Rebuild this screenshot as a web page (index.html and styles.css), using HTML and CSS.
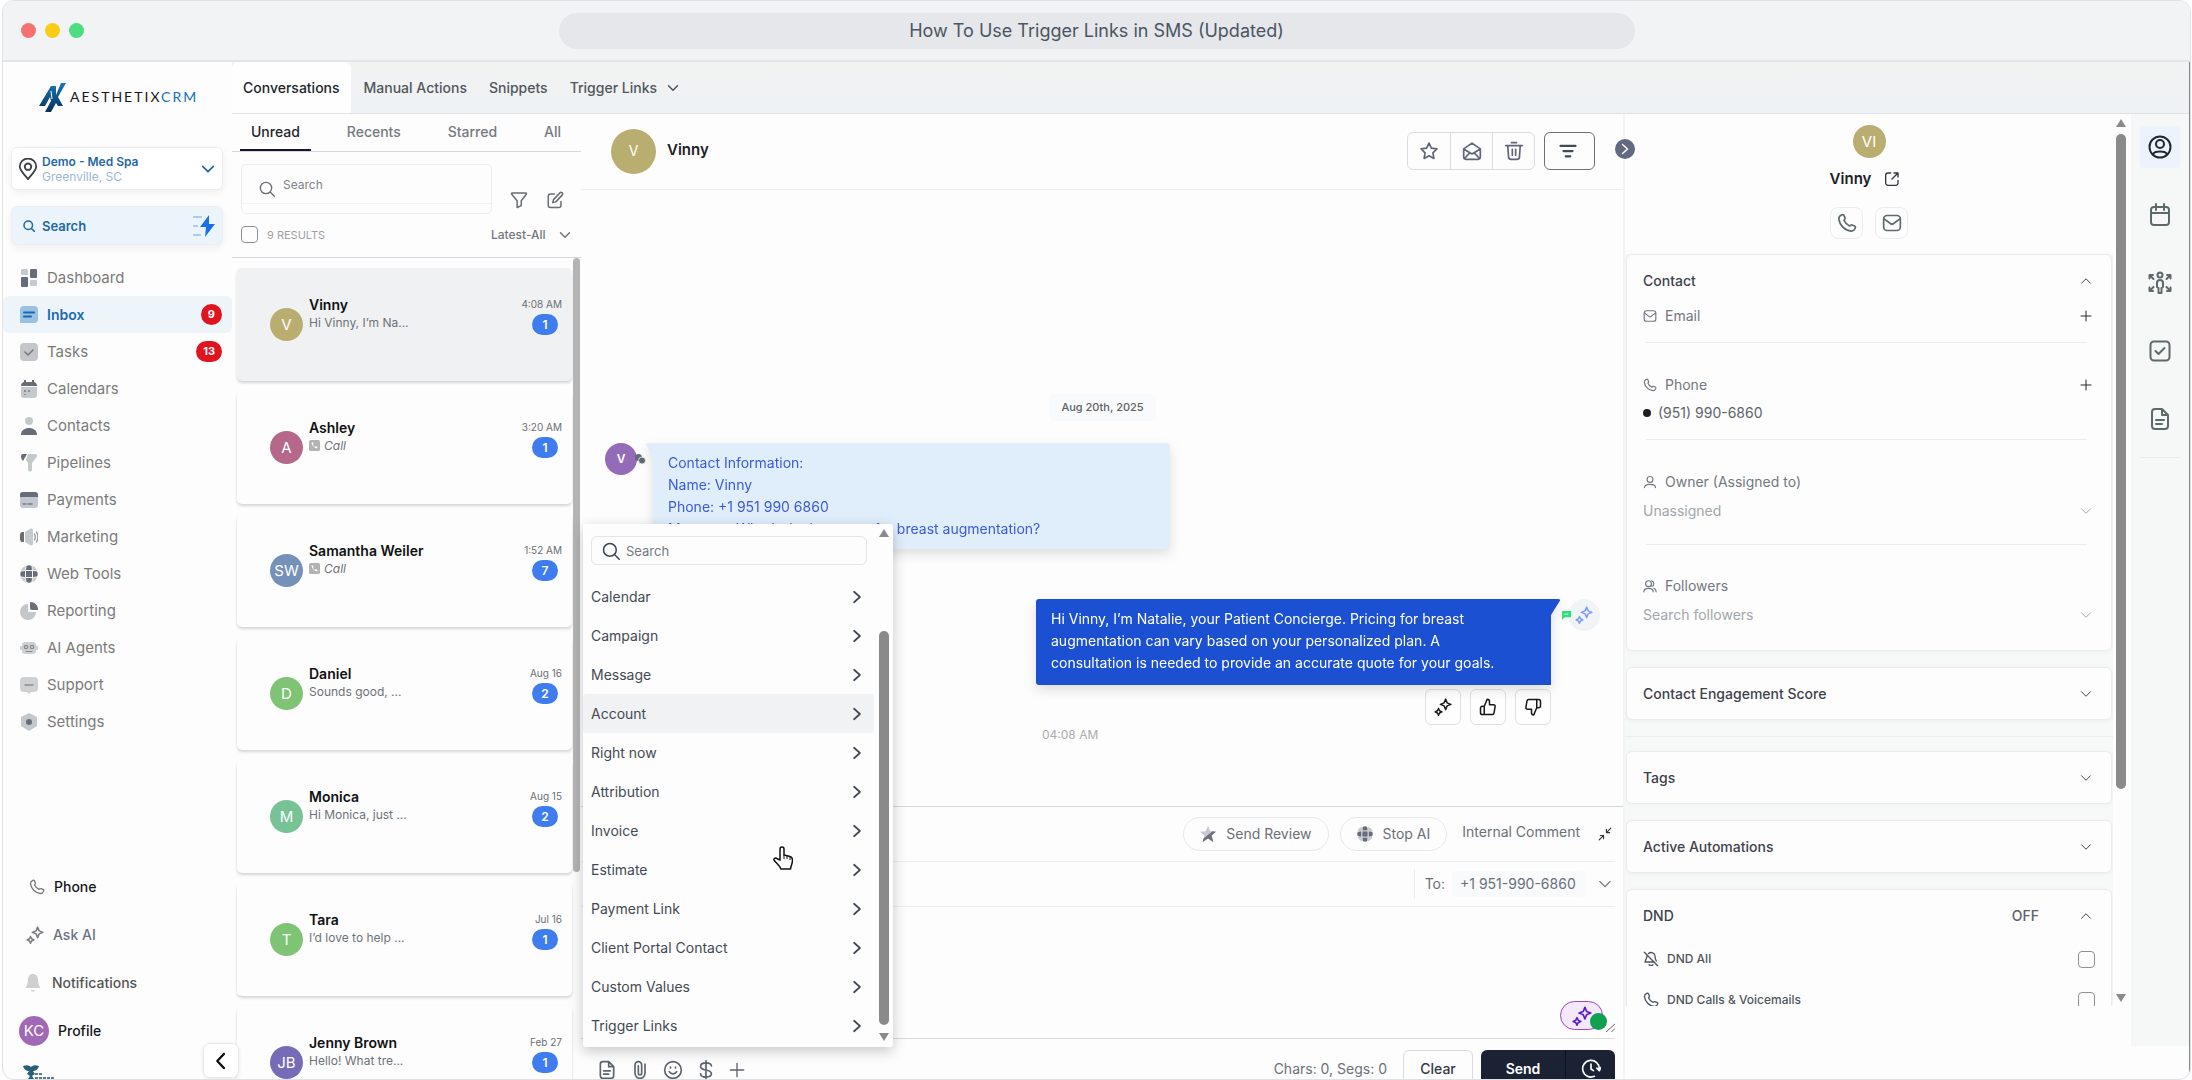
FILE: index.html
```html
<!DOCTYPE html>
<html lang="en">
<head>
<meta charset="utf-8">
<title>How To Use Trigger Links in SMS (Updated)</title>
<link rel="stylesheet" href="styles.css">
</head>
<body>
<svg class="sprite" aria-hidden="true">
  <defs>
    <symbol id="chev-down" viewBox="0 0 24 24"><path d="M3 7.500l9 9 9-9"/></symbol>
    <symbol id="chev-up" viewBox="0 0 24 24"><path d="M3 16.500l9-9 9 9"/></symbol>
    <symbol id="chev-right" viewBox="0 0 24 24"><path d="M7 3l10 9-10 9"/></symbol>
    <symbol id="chev-left" viewBox="0 0 24 24"><path d="M16 2.500L7 12l9 9.500"/></symbol>
    <symbol id="search" viewBox="0 0 24 24"><circle cx="10.500" cy="10.500" r="8.500"/><path d="M17 17l6 6"/></symbol>
    <symbol id="pin" viewBox="0 0 24 24"><path d="M12 23C6 16 3 13 3 9.500a9 9 0 0 1 18 0C21 13 18 16 12 23z"/><circle cx="12" cy="9.500" r="3.500"/></symbol>
    <symbol id="phone" viewBox="0 0 24 24"><path d="M8.400 8.900a14 14 0 0 0 6.700 6.700c1-.6 1.700-1.600 3-1.200l3.400 1.500c.8.500.8 1.600.3 2.400-1 2-2.800 3.700-4.800 3.400C9.500 21 3 14.500 2.200 7 2 5 3.700 3.200 5.700 2.200c.8-.4 1.900-.4 2.400.3l1.500 3.400c.4 1.300-.6 2-1.200 3z"/></symbol>
    <symbol id="mail" viewBox="0 0 24 24"><rect x="2" y="3" width="20" height="18" rx="4"/><path d="M2.500 7l7.600 5.600a3 3 0 0 0 3.800 0L21.500 7"/></symbol>
    <symbol id="mail-open" viewBox="0 0 24 24"><path d="M2 9.500L12 2.500l10 7V19a3 3 0 0 1-3 3H5a3 3 0 0 1-3-3zM2 9.500l10 6 10-6M3 21l6.500-7M21 21l-6.500-7"/></symbol>
    <symbol id="star" viewBox="0 0 24 24"><path d="M12 2.500l2.900 6.100 6.600.9-4.800 4.700 1.200 6.700-5.900-3.200-5.900 3.200 1.200-6.700-4.800-4.700 6.600-.9z"/></symbol>
    <symbol id="trash" viewBox="0 0 24 24"><path d="M2 5.500h20M9 2h6M4.500 5.500l1 14A3 3 0 0 0 8.500 22h7a3 3 0 0 0 3-2.500l1-14M10 10v7M14 10v7"/></symbol>
    <symbol id="lines" viewBox="0 0 24 24"><path d="M2 5h20M6 12h12M9 19h6"/></symbol>
    <symbol id="funnel" viewBox="0 0 24 24"><path d="M3 2.500h18c1 0 1.300 1 .7 1.900L15 13v6.500L9.500 22v-9L2.300 4.400C1.700 3.500 2 2.500 3 2.500z"/></symbol>
    <symbol id="edit" viewBox="0 0 24 24"><path d="M11 4H6a3 3 0 0 0-3 3v12a3 3 0 0 0 3 3h11a3 3 0 0 0 3-3v-5M18.500 2.500a2 2 0 0 1 3 3L13 14.500l-4 1 1-4z"/></symbol>
    <symbol id="external" viewBox="0 0 24 24"><path d="M21 9V3h-6M21 3l-9 9M10 3H6a3.500 3.500 0 0 0-3.500 3.500V18A3.500 3.500 0 0 0 6 21.500h11.500A3.500 3.500 0 0 0 21 18v-4"/></symbol>
    <symbol id="plus" viewBox="0 0 24 24"><path d="M12 2v20M2 12h20"/></symbol>
    <symbol id="sparkles" viewBox="0 0 24 24"><path d="M15.500 1.500l2 5 5 2-5 2-2 5-2-5-5-2 5-2zM6 14l1.400 3L10.500 18.500 7.400 20 6 23l-1.400-3L1.500 18.500 4.600 17z"/></symbol>
    <symbol id="user" viewBox="0 0 24 24"><circle cx="12" cy="7.500" r="5"/><path d="M2.500 21.500c0-4 3-5.500 9.500-5.500s9.500 1.500 9.500 5.500"/></symbol>
    <symbol id="users" viewBox="0 0 24 24"><circle cx="9.500" cy="8" r="5"/><path d="M1.500 22c0-4 3-6 8-6s8 2 8 6M15 3.200a5 5 0 0 1 0 9.600M18.500 16c2.500 1 4 3 4 6"/></symbol>
    <symbol id="bell-off" viewBox="0 0 24 24"><path d="M2 2l20 20M6 7c-.6 6-2.500 7-3 9.500h14M8 4c4-3.500 10-1 10 4 0 3 .6 5 2 7M9 20.500c1.500 1.500 4.500 1.500 6 0"/></symbol>
    <symbol id="doc" viewBox="0 0 24 24"><path d="M14 2H7a3 3 0 0 0-3 3v14a3 3 0 0 0 3 3h10a3 3 0 0 0 3-3V8zM14 2v6h6M8 13h8M8 17h6"/></symbol>
    <symbol id="clip" viewBox="0 0 24 24"><path d="M18 5v11a6 6 0 0 1-12 0V6a4 4 0 0 1 8 0v10a2 2 0 0 1-4 0V7"/></symbol>
    <symbol id="smile" viewBox="0 0 24 24"><circle cx="12" cy="12" r="10"/><path d="M7.500 14c2 3.500 7 3.500 9 0M9 8.500v1M15 8.500v1"/></symbol>
    <symbol id="dollar" viewBox="0 0 24 24"><path d="M18.500 7c-.5-2.500-3-3.500-6.500-3.500S5.500 5 5.500 7.700c0 6 13 2.600 13 8.600 0 2.700-3 4.200-6.500 4.200S5.500 19 5.500 16.500M12 1v22"/></symbol>
    <symbol id="thumb" viewBox="0 0 24 24"><path d="M7 22V11l4-9.500c1.700 0 3 1.300 3 3V9h5.500c1.300 0 2.200 1.100 2 2.300l-1.400 8.500A2.600 2.600 0 0 1 17.600 22H4.500A2.500 2.500 0 0 1 2 19.500v-6A2.500 2.500 0 0 1 4.500 11H7"/></symbol>
    <symbol id="collapse" viewBox="0 0 24 24"><path d="M22 2l-7.500 7.500M14.500 4v5.500H20M2 22l7.500-7.500M4 14.500h5.500V20"/></symbol>
    <symbol id="clock" viewBox="0 0 24 24"><path d="M16 20.800A10 10 0 1 1 22 12M12 6v6l3 2M19 11l3 3 2-4"/></symbol>
    <symbol id="user-circle" viewBox="0 0 24 24"><circle cx="12" cy="12" r="10.500"/><circle cx="12" cy="9" r="4"/><path d="M5 19.500c1-3 3.500-3 7-3s6 0 7 3"/></symbol>
    <symbol id="calendar" viewBox="0 0 24 24"><rect x="3" y="4" width="18" height="18" rx="3"/><path d="M3 10h18M8 1v6M16 1v6"/></symbol>
    <symbol id="check-square" viewBox="0 0 24 24"><rect x="2.500" y="2.500" width="19" height="19" rx="3.500"/><path d="M7.500 12l3 3 6-6"/></symbol>
    <symbol id="spread" viewBox="0 0 24 24"><circle cx="12" cy="4" r="2.500"/><path d="M9 16v-4a3 3 0 0 1 6 0v4l-1.500 1v5h-3v-5zM1.500 7.500V4H5M1.500 4l4 4M22.500 7.500V4H19M22.500 4l-4 4M1.500 16.500V20H5M1.500 20l4-4M22.500 16.500V20H19M22.500 20l-4-4"/></symbol>
    <symbol id="tri-up" viewBox="0 0 10 8"><path d="M5 0l5 8H0z"/></symbol>
    <symbol id="tri-down" viewBox="0 0 10 8"><path d="M0 0h10L5 8z"/></symbol>
    <symbol id="call-tile" viewBox="0 0 12 12"><rect width="12" height="12" rx="2" fill="#b3b3b3"/><path d="M3 2.500l1.500.3.400 1.700-.8.800c.5 1 1.200 1.700 2.200 2.200l.9-.8 1.700.5.300 1.500C7 9.800 2.200 6 3 2.500z" fill="#fff" stroke="none"/></symbol>
    <symbol id="globe" viewBox="0 0 18 18"><g stroke="none"><circle cx="9" cy="9" r="9" fill="#c6c9cf"/><path d="M5.500 0h7v18h-7zM0 5.500h18v7H0z" fill="#fcfcfc"/><rect x="6" y="6" width="6" height="6" fill="#676c7b"/><path d="M6.500 1a5 5 0 0 1 5 0l.5 4H6zM6.500 17a5 5 0 0 0 5 0l.5-4H6zM1 6.500a5 5 0 0 0 0 5l4 .5V6zM17 6.500a5 5 0 0 1 0 5l-4 .5V6z" fill="#676c7b"/></g></symbol>
  </defs>
</svg>

<div class="window">
  <header class="titlebar">
    <div class="dots"><span class="dot red"></span><span class="dot yellow"></span><span class="dot green"></span></div>
    <div class="address">How To Use Trigger Links in SMS (Updated)</div>
  </header>

  <div class="app">
    <aside class="sidebar">
      <div class="brand">
        <svg class="brand-mark" viewBox="0 0 27 29"><defs><linearGradient id="bm" x1="0" y1="0" x2="0" y2="1"><stop offset="0" stop-color="#1479b8"/><stop offset="1" stop-color="#0c2f55"/></linearGradient></defs><path d="M0 23L12 3h5v9l5-12h5l-8 14 5 9h-5l-2-3-5 9H6l6-11-1-4-5 9z" fill="url(#bm)"/><path d="M12 8l1 8" stroke="#fff" stroke-width="1"/></svg>
        <span class="brand-name">AESTHETIX<span class="brand-crm">CRM</span></span>
      </div>
      <button class="location">
        <svg class="i22 pin"><use href="#pin"/></svg>
        <span class="location-text"><strong>Demo - Med Spa</strong><span>Greenville, SC</span></span>
        <svg class="i14 thick"><use href="#chev-down"/></svg>
      </button>
      <button class="side-search">
        <svg class="i12 thick"><use href="#search"/></svg>
        <span>Search</span>
        <svg class="bolt" viewBox="0 0 22 22"><path d="M0 2h9M0 11h5M0 20h8" stroke="#a9cdf0" stroke-width="2"/><path d="M16 0L7 12h6l-1 10L22 9h-6z" fill="#1b70ea"/></svg>
      </button>
      <nav class="nav">
        <a href="#"><svg class="i18" viewBox="0 0 18 18"><g fill="#676c7b"><rect x="10" width="7" height="9" rx="1"/><rect x="1" y="8" width="7" height="10" rx="1"/></g><g fill="#c6c9cf"><rect x="1" width="7" height="6" rx="1"/><rect x="10" y="11" width="7" height="6" rx="1"/></g></svg><span>Dashboard</span></a>
        <a href="#" class="active"><svg class="i18" viewBox="0 0 18 18"><path d="M4 0h10a4 4 0 0 1 4 4v9a4 4 0 0 1-4 4H0V4a4 4 0 0 1 4-4z" fill="#98c1e2"/><path d="M4 6.500h10M4 10.500h7" stroke="#1a69b0" stroke-width="2"/></svg><span>Inbox</span><em class="badge">9</em></a>
        <a href="#"><svg class="i18" viewBox="0 0 18 18"><rect width="18" height="18" rx="4" fill="#c4c6c9"/><path d="M5 9l3 3 5-5" stroke="#74777d" stroke-width="1.500" fill="none"/></svg><span>Tasks</span><em class="badge">13</em></a>
        <a href="#"><svg class="i18" viewBox="0 0 18 18"><path d="M1 7h16v8a3 3 0 0 1-3 3H4a3 3 0 0 1-3-3z" fill="#c6c9cc"/><path d="M1 6a4 4 0 0 1 3-4V0h2v2h6V0h2v2a4 4 0 0 1 3 4z" fill="#676c73"/><path d="M4 10h2v2H4zM8 10h2v2H8zM4 14h2v1H4z" fill="#8a8d92"/></svg><span>Calendars</span></a>
        <a href="#"><svg class="i18" viewBox="0 0 18 18"><circle cx="9" cy="4" r="4" fill="#c6c9cc"/><path d="M1 18c0-5 4-7 8-7s8 2 8 7z" fill="#676c77"/></svg><span>Contacts</span></a>
        <a href="#"><svg class="i18" viewBox="0 0 18 18"><path d="M8 0h7c1.500 0 2 1 2 2.500L12 9v7c0 2-4 2-4 0V9L6 6z" fill="#c4c9cb"/><path d="M2 0h5L3 7C1 5 1 3 1 1.500z" fill="#676c77"/></svg><span>Pipelines</span></a>
        <a href="#"><svg class="i18" viewBox="0 0 18 18"><rect y="1" width="18" height="16" rx="3" fill="#c4c7cf"/><path d="M0 6V4a3 3 0 0 1 3-3h12a3 3 0 0 1 3 3v2z" fill="#676c7b"/><path d="M3 13h3M8 13h4" stroke="#777c85" stroke-width="1.500"/></svg><span>Payments</span></a>
        <a href="#"><svg class="i18" viewBox="0 0 18 18"><path d="M5 4l5-3c2-1 3 0 3 2v12c0 2-1 3-3 2l-5-3z" fill="#c4c9cb"/><path d="M4 4v10H2c-3 0-3-10 0-10z" fill="#6b6e70"/><path d="M14.500 6c1 2 1 4 0 6M16.500 4c1.700 3 1.700 7 0 10" stroke="#8a8d90" stroke-width="1.200" fill="none"/></svg><span>Marketing</span></a>
        <a href="#"><svg class="i18"><use href="#globe"/></svg><span>Web Tools</span></a>
        <a href="#"><svg class="i18" viewBox="0 0 18 18"><path d="M8 2v8h8a8 8 0 1 1-8-8z" fill="#c4c7ca"/><path d="M10 0c5 0 8 3 8 8h-6a2 2 0 0 1-2-2z" fill="#6b6e77"/></svg><span>Reporting</span></a>
        <a href="#"><svg class="i18" viewBox="0 0 18 18"><rect x="2" y="3" width="14" height="12" rx="3" fill="#cfd0d1"/><path d="M0 7h18v4H0z" fill="#cfd0d1"/><g fill="none" stroke="#85878a" stroke-width="1.200"><circle cx="6" cy="8" r="1.700"/><circle cx="12" cy="8" r="1.700"/><path d="M6 12.500h6"/></g></svg><span>AI Agents</span></a>
        <a href="#"><svg class="i18" viewBox="0 0 18 18"><path d="M4 1h10a4 4 0 0 1 4 4v7a4 4 0 0 1-4 4h-3l-2 2-2-2H4a4 4 0 0 1-4-4V5a4 4 0 0 1 4-4z" fill="#cfd0d1"/><path d="M5 9h2M8 9h2M11 9h2" stroke="#8a8d90" stroke-width="1.500"/></svg><span>Support</span></a>
        <a href="#"><svg class="i18" viewBox="0 0 18 18"><path d="M9 0l8 4v9l-8 5-8-5V4z" fill="#c2c8cd"/><circle cx="9" cy="9" r="3" fill="#676c77"/></svg><span>Settings</span></a>
      </nav>
      <div class="side-foot">
        <a href="#" class="dark"><svg class="i16 gray"><use href="#phone"/></svg><span>Phone</span></a>
        <a href="#"><svg class="i18 gray"><use href="#sparkles"/></svg><span>Ask AI</span></a>
        <a href="#" class="mid"><svg class="i20" viewBox="0 0 20 20"><path d="M10 1c5 0 5 5 5.500 9 .2 3 1.500 3 1.500 5H3c0-2 1.300-2 1.500-5C5 6 5 1 10 1zM8 17h4c0 2-4 2-4 0z" fill="#cfcfcf"/></svg><span>Notifications</span></a>
        <a href="#" class="dark"><i class="avatar a30 purple">KC</i><span>Profile</span></a>
      </div>
      <div class="side-end">
        <svg class="medic" viewBox="0 0 32 20"><path d="M0 1c5-2 7 0 8 1 1-1 3-3 8-1-1 4-4 5-6 5l2 3-3 2 2 3-2 1v5H7v-5l-2-1 2-3-3-2 2-3C4 6 1 5 0 1z" fill="#27607a"/><path d="M12 9h8M12 13h20" stroke="#59798c" stroke-width="2" stroke-dasharray="3 1"/></svg>
        <button class="back" aria-label="Collapse sidebar"><svg class="i18 thick"><use href="#chev-left"/></svg></button>
      </div>
    </aside>

    <main class="main">
      <nav class="tabs">
        <a href="#" class="active">Conversations</a>
        <a href="#">Manual Actions</a>
        <a href="#">Snippets</a>
        <a href="#">Trigger Links <svg class="i12 thick"><use href="#chev-down"/></svg></a>
      </nav>
      <div class="columns">
        <section class="list">
          <nav class="subtabs"><a href="#" class="active">Unread</a><a href="#">Recents</a><a href="#">Starred</a><a href="#">All</a></nav>
          <div class="list-tools">
            <label class="list-search"><svg class="i16"><use href="#search"/></svg><input type="text" placeholder="Search" aria-label="Search conversations"></label>
            <svg class="i18"><use href="#funnel"/></svg>
            <svg class="i18"><use href="#edit"/></svg>
          </div>
          <div class="list-meta">
            <label class="results"><input type="checkbox">9 RESULTS</label>
            <label class="sort"><select aria-label="Sort"><option>Latest-All</option></select><svg class="i12 thick"><use href="#chev-down"/></svg></label>
          </div>
          <div class="list-body">
            <div class="cards">
              <article class="card selected"><i class="avatar a33 olive">V</i><div class="who"><b>Vinny</b><span>Hi Vinny, I’m Na...</span></div><div class="when"><time>4:08 AM</time><em>1</em></div></article>
              <article class="card"><i class="avatar a33 rose">A</i><div class="who"><b>Ashley</b><span class="call"><svg class="tile"><use href="#call-tile"/></svg>Call</span></div><div class="when"><time>3:20 AM</time><em>1</em></div></article>
              <article class="card"><i class="avatar a33 steel">SW</i><div class="who"><b>Samantha Weiler</b><span class="call"><svg class="tile"><use href="#call-tile"/></svg>Call</span></div><div class="when"><time>1:52 AM</time><em>7</em></div></article>
              <article class="card"><i class="avatar a33 lime">D</i><div class="who"><b>Daniel</b><span>Sounds good, ...</span></div><div class="when"><time>Aug 16</time><em>2</em></div></article>
              <article class="card"><i class="avatar a33 mint">M</i><div class="who"><b>Monica</b><span>Hi Monica, just ...</span></div><div class="when"><time>Aug 15</time><em>2</em></div></article>
              <article class="card"><i class="avatar a33 lime">T</i><div class="who"><b>Tara</b><span>I’d love to help ...</span></div><div class="when"><time>Jul 16</time><em>1</em></div></article>
              <article class="card"><i class="avatar a33 indigo">JB</i><div class="who"><b>Jenny Brown</b><span>Hello! What tre...</span></div><div class="when"><time>Feb 27</time><em>1</em></div></article>
            </div>
            <div class="list-scroll"></div>
          </div>
        </section>

        <section class="chat">
          <header class="chat-head">
            <i class="avatar a45 olive">V</i><h2>Vinny</h2>
            <div class="group"><button aria-label="Star"><svg class="i20"><use href="#star"/></svg></button><button aria-label="Mark as read"><svg class="i20"><use href="#mail-open"/></svg></button><button aria-label="Delete"><svg class="i20"><use href="#trash"/></svg></button></div>
            <button class="filter" aria-label="Filter"><svg class="i18 thick"><use href="#lines"/></svg></button>
            <button class="fold" aria-label="Fold details"><svg class="i12 thick"><use href="#chev-right"/></svg></button>
          </header>
          <div class="messages">
            <div class="date">Aug 20th, 2025</div>
            <div class="msg-in">
              <i class="avatar a32 violet">V</i>
              <svg class="chat-mini" viewBox="0 0 12 12"><circle cx="4.500" cy="4.500" r="3.500" fill="#5f6b70"/><circle cx="8" cy="7.500" r="3.500" fill="#5f6b70" stroke="#fff" stroke-width=".7"/></svg>
              <div class="cast"><p class="bubble-in">Contact Information:<br>Name: Vinny<br>Phone: +1 951 990 6860<br>Message: What’s the best cost for breast augmentation?</p></div>
            </div>
            <div class="msg-out">
              <div class="cast"><p class="bubble-out">Hi Vinny, I’m Natalie, your Patient Concierge. Pricing for breast augmentation can vary based on your personalized plan. A consultation is needed to provide an accurate quote for your goals.</p></div>
              <svg class="sms" viewBox="0 0 10 10"><path d="M0 0h10v7H3L0 10z" fill="#2ee07a"/><path d="M2 3.500h5" stroke="#d9ffe8"/></svg>
              <span class="ai-dot"><svg class="i18"><use href="#sparkles"/></svg></span>
            </div>
            <div class="reactions"><button aria-label="Improve"><svg class="i18"><use href="#sparkles"/></svg></button><button aria-label="Like"><svg class="i18"><use href="#thumb"/></svg></button><button aria-label="Dislike"><svg class="i18 flip"><use href="#thumb"/></svg></button></div>
            <time class="sent">04:08 AM</time>
          </div>
          <div class="composer">
            <div class="row actions">
              <button class="pill"><svg class="i16" viewBox="0 0 18 18"><path d="M9 0l2.500 6 6.500.5-5 4.200L15 18l-6-4-6 4 2-7.300L0 6.500 6.500 6z" fill="#c6c9cf"/><path d="M14 6l4 .5-5 4.200L15 18l-6-4-6 4 1-4z" fill="#6d7180"/></svg>Send Review</button>
              <button class="pill"><svg class="i16"><use href="#globe"/></svg>Stop AI</button>
              <a href="#" class="internal">Internal Comment</a>
              <svg class="i14"><use href="#collapse"/></svg>
            </div>
            <label class="row to"><span class="to-label">To:</span><select><option>+1 951-990-6860</option></select><svg class="i14"><use href="#chev-down"/></svg></label>
            <div class="write">
              <textarea aria-label="Message"></textarea>
              <span class="ai-pill"><svg class="i20"><use href="#sparkles"/></svg><i></i></span>
              <svg class="grip" viewBox="0 0 10 10"><path d="M0 10L10 1M6 10l4-4" stroke="#555" fill="none"/></svg>
            </div>
            <div class="row toolbar">
              <div class="tools"><svg class="i20"><use href="#doc"/></svg><svg class="i20"><use href="#clip"/></svg><svg class="i20"><use href="#smile"/></svg><svg class="i20"><use href="#dollar"/></svg><svg class="i16"><use href="#plus"/></svg></div>
              <span class="count">Chars: 0, Segs: 0</span>
              <button class="clear">Clear</button>
              <button class="send">Send</button><button class="later" aria-label="Schedule"><svg class="i20"><use href="#clock"/></svg></button>
            </div>
          </div>

          <div class="popup">
            <div class="popup-main">
              <label class="popup-search"><svg class="i18"><use href="#search"/></svg><input type="text" placeholder="Search" aria-label="Search values"></label>
              <button>Calendar<svg class="i14 thick"><use href="#chev-right"/></svg></button>
              <button>Campaign<svg class="i14 thick"><use href="#chev-right"/></svg></button>
              <button>Message<svg class="i14 thick"><use href="#chev-right"/></svg></button>
              <button class="hover">Account<svg class="i14 thick"><use href="#chev-right"/></svg></button>
              <button>Right now<svg class="i14 thick"><use href="#chev-right"/></svg></button>
              <button>Attribution<svg class="i14 thick"><use href="#chev-right"/></svg></button>
              <button>Invoice<svg class="i14 thick"><use href="#chev-right"/></svg></button>
              <button>Estimate<svg class="i14 thick"><use href="#chev-right"/></svg></button>
              <button>Payment Link<svg class="i14 thick"><use href="#chev-right"/></svg></button>
              <button>Client Portal Contact<svg class="i14 thick"><use href="#chev-right"/></svg></button>
              <button>Custom Values<svg class="i14 thick"><use href="#chev-right"/></svg></button>
              <button>Trigger Links<svg class="i14 thick"><use href="#chev-right"/></svg></button>
            </div>
            <div class="bar popup-bar"><svg class="tri"><use href="#tri-up"/></svg><span class="thumb"></span><svg class="tri"><use href="#tri-down"/></svg></div>
            <svg class="cursor" viewBox="0 0 20 24"><path d="M7 14V3a2 2 0 0 1 4 0v6l6 1.500c2 .5 2.500 1.500 2.500 3.500 0 4-1.500 5-2 9H8c-1-3-5-6-7-9-.5-2 2-2.500 3.500-1z" fill="#fff" stroke="#111" stroke-width="1.500"/><path d="M11 9v4M14 10v3M17 11v3" stroke="#111"/></svg>
          </div>
        </section>

        <section class="details">
          <div class="details-main">
            <div class="profile">
              <i class="avatar a33 olive">VI</i>
              <div class="profile-name"><h2>Vinny</h2><svg class="i16"><use href="#external"/></svg></div>
              <div class="profile-actions"><button aria-label="Call"><svg class="i20"><use href="#phone"/></svg></button><button aria-label="Email"><svg class="i20"><use href="#mail"/></svg></button></div>
            </div>
            <div class="panel contact">
              <button class="panel-head">Contact<svg class="i12"><use href="#chev-up"/></svg></button>
              <div class="field email"><div class="field-head"><svg class="i14"><use href="#mail"/></svg><span>Email</span><svg class="i12 ink"><use href="#plus"/></svg></div></div>
              <div class="field tel"><div class="field-head"><svg class="i14"><use href="#phone"/></svg><span>Phone</span><svg class="i12 ink"><use href="#plus"/></svg></div><div class="number">(951) 990-6860</div></div>
              <div class="field owner"><label class="field-head" for="owner"><svg class="i14"><use href="#user"/></svg><span>Owner (Assigned to)</span></label><div class="pick"><select id="owner"><option>Unassigned</option></select><svg class="i12"><use href="#chev-down"/></svg></div></div>
              <div class="field follow"><label class="field-head" for="follow"><svg class="i14"><use href="#users"/></svg><span>Followers</span></label><div class="pick"><input id="follow" type="text" placeholder="Search followers"><svg class="i12"><use href="#chev-down"/></svg></div></div>
            </div>
            <div class="panel"><button class="panel-head">Contact Engagement Score<svg class="i12"><use href="#chev-down"/></svg></button></div>
            <hr>
            <div class="panel"><button class="panel-head">Tags<svg class="i12"><use href="#chev-down"/></svg></button></div>
            <div class="panel"><button class="panel-head">Active Automations<svg class="i12"><use href="#chev-down"/></svg></button></div>
            <div class="panel dnd">
              <button class="panel-head">DND<span class="off">OFF</span><svg class="i12"><use href="#chev-up"/></svg></button>
              <label><svg class="i16"><use href="#bell-off"/></svg><span>DND All</span><input type="checkbox"></label>
              <label><svg class="i16"><use href="#phone"/></svg><span>DND Calls &amp; Voicemails</span><input type="checkbox"></label>
            </div>
          </div>
          <div class="bar details-bar"><svg class="tri"><use href="#tri-up"/></svg><span class="thumb"></span><svg class="tri"><use href="#tri-down"/></svg></div>
        </section>

        <nav class="rail">
          <a href="#" class="active" aria-label="Contact"><svg class="i24"><use href="#user-circle"/></svg></a>
          <a href="#" aria-label="Appointments"><svg class="i24"><use href="#calendar"/></svg></a>
          <a href="#" aria-label="Opportunities"><svg class="i24"><use href="#spread"/></svg></a>
          <a href="#" aria-label="Tasks"><svg class="i24"><use href="#check-square"/></svg></a>
          <a href="#" aria-label="Notes"><svg class="i24"><use href="#doc"/></svg></a>
        </nav>
      </div>
    </main>
  </div>
</div>
</body>
</html>
```
FILE: styles.css
```css
* { box-sizing: border-box; }
body { margin: 0; background: #fff; font: 14px/20px Inter, "Liberation Sans", sans-serif; color: #3d4350; }
h2, p { margin: 0; font: inherit; }
a { color: inherit; text-decoration: none; }
button, input, select, textarea { font: inherit; color: inherit; border: 0; background: none; padding: 0; margin: 0; outline: 0; }
select { appearance: none; }
i, em { font-style: normal; }
svg { fill: none; stroke: none; flex: none; display: block; }
symbol { overflow: visible; }
.sprite { position: absolute; width: 0; height: 0; }

svg[class^="i"] { stroke: currentColor; stroke-width: 2; stroke-linecap: round; stroke-linejoin: round; }
svg[class^="i"].thick { stroke-width: 3; }
svg[viewBox="0 0 18 18"][class^="i"], svg[viewBox="0 0 20 20"][class^="i"] { stroke: none; }
.i12 { width: 12px; height: 12px; }
.i14 { width: 14px; height: 14px; }
.i16 { width: 16px; height: 16px; }
.i18 { width: 18px; height: 18px; }
.i20 { width: 20px; height: 20px; }
.i22 { width: 22px; height: 22px; }
.i24 { width: 24px; height: 24px; }

.avatar { display: flex; align-items: center; justify-content: center; flex: none; border-radius: 50%; color: #fff; font-weight: 400; }
.a30 { width: 30px; height: 30px; font-size: 15px; }
.a32 { width: 32px; height: 32px; font-size: 12px; font-weight: 600; }
.a33 { width: 33px; height: 33px; font-size: 15px; }
.a45 { width: 45px; height: 45px; font-size: 14px; }
.olive { background: #b9ae70; }
.rose { background: #b5688a; }
.steel { background: #7590b9; }
.lime { background: #7fc474; }
.mint { background: #77c396; }
.indigo { background: #766bb6; }
.violet { background: #946bb8; }
.purple { background: #a168b5; }

.window { height: 100vh; margin: 0 1px 0 2px; display: flex; flex-direction: column; overflow: hidden; border: 1px solid #dfe1e5; border-radius: 12px; background: #fdfdfd; }
.titlebar { flex: none; height: 61px; display: flex; align-items: center; background: #f2f3f5; border-bottom: 2px solid #e4e5e9; padding: 0 18px; }
.dots { flex: 1; display: flex; gap: 9px; }
.dot { width: 15px; height: 15px; border-radius: 50%; }
.red { background: #f87171; }
.yellow { background: #facc15; }
.green { background: #4ade80; }
.address { flex: 0 0 1076px; height: 36px; border-radius: 18px; background: #e5e7ea; text-align: center; font-size: 18px; line-height: 36px; color: #4b5563; }
.titlebar::after { content: ""; flex: 1; }
.app { flex: 1; min-height: 0; display: flex; }

.sidebar { flex: none; width: 229px; display: flex; flex-direction: column; color: #858585; font-weight: 500; }
.brand { height: 85px; padding: 21px 0 0 36px; display: flex; align-items: flex-start; gap: 4px; }
.brand-mark { width: 27px; height: 29px; }
.brand-name { font: 400 14px/28px Lato, sans-serif; letter-spacing: 2px; color: #16181c; }
.brand-crm { color: #1270b8; }
.location, .side-search { display: flex; align-items: center; text-align: left; margin: 0 9px 16px 8px; border: 1px solid #eceef0; border-radius: 6px; box-shadow: 0 3px 10px rgba(0,0,0,.06); color: #1f68a6; }
.location { height: 43px; padding: 0 7px 0 5px; gap: 3px; font-size: 12px; line-height: 15px; background: #fff; }
.pin { color: #3f4246; }
.location-text { flex: 1; display: flex; flex-direction: column; }
.location-text strong { font-weight: 600; }
.location-text span { color: #9ab8d4; font-weight: 400; }
.side-search { height: 39px; padding: 0 7px 0 11px; gap: 7px; background: #ecf4fb; font-size: 13px; font-weight: 600; margin-bottom: 14px; }
.side-search span { flex: 1; }
.bolt { width: 22px; height: 22px; }
.nav { display: flex; flex-direction: column; font-size: 15px; font-weight: 400; color: #7b7b7b; }
.nav a { height: 37px; padding: 0 10px 0 17px; display: flex; align-items: center; gap: 9px; }
.nav span { flex: 1; }
.nav .active { background: #edf5fb; color: #1a69b0; font-weight: 600; border-radius: 6px; font-size: 14px; }
.badge { background: #df141d; color: #fff; border-radius: 11px; font-size: 11px; font-weight: 700; line-height: 21px; padding: 0 7px; }
.side-foot { margin-top: auto; display: flex; flex-direction: column; gap: 26px; padding: 0 16px 1px; }
.side-foot a { display: flex; align-items: center; gap: 9px; height: 22px; color: #6b7280; padding-left: 7px; }
.side-foot .dark { color: #15171a; padding-left: 10px; }
.side-foot a.dark:last-child { padding-left: 0; }
.side-foot .mid { color: #555; padding-left: 4px; }
.gray { color: #77797d; }
.side-end { height: 36px; padding: 0 0 0 20px; display: flex; justify-content: space-between; align-items: flex-start; }
.medic { width: 32px; height: 20px; margin-top: 22px; }
.back { width: 36px; height: 35px; border: 1px solid #e8e8e8; border-radius: 7px; background: #fff; display: flex; align-items: center; justify-content: center; color: #111; box-shadow: 0 1px 4px rgba(0,0,0,.08); margin-right: -7px; z-index: 2; }

.main { flex: 1; min-width: 0; display: flex; flex-direction: column; border-right: 1px solid #85878a; }
.tabs { flex: none; height: 52px; display: flex; align-items: stretch; background: linear-gradient(#f2f2f2, #eef2f4); border-bottom: 1px solid #dfe1e4; padding-right: 12px; font-weight: 500; color: #50565d; }
.tabs a { display: flex; align-items: center; gap: 10px; padding: 0 11px; }
.tabs a:first-child { margin-right: 2px; }
.tabs .active { background: #fefefe; color: #22262c; border-radius: 6px 6px 0 0; }
.columns { flex: 1; min-height: 0; display: flex; }

.list { flex: none; width: 349px; display: flex; flex-direction: column; }
.subtabs { display: flex; justify-content: space-between; height: 38px; border-bottom: 1px solid #d5d6da; padding: 0 20px 0 8px; font-weight: 500; color: #767a80; line-height: 36px; }
.subtabs .active { color: #23262d; border-bottom: 2px solid #15152b; padding: 0 11px; margin-right: -11px; }
.list-tools { display: flex; gap: 18px; padding: 12px 17px 0 9px; align-items: flex-end; color: #6a6d72; }
.list-search { flex: 1; display: flex; align-items: center; gap: 8px; height: 50px; border: 1px solid #eceded; border-radius: 5px; padding: 0 17px; background: linear-gradient(#f2f2f2, #f2f2f2) 0 38px / 100% 1px no-repeat; }
.list-search input { width: 100%; font-size: 12px; padding-bottom: 8px; }
.list-search input::placeholder { color: #7e8186; }
.list-tools > svg { margin-bottom: 5px; }
.list-meta { display: flex; justify-content: space-between; align-items: center; height: 44px; border-bottom: 1px solid #d5d6da; padding: 0 10px 2px 9px; }
input[type=checkbox] { appearance: none; width: 17px; height: 17px; border: 1px solid #8d9196; border-radius: 4px; flex: none; }
.results { display: flex; align-items: center; gap: 9px; font-size: 11px; color: #9fa1a5; }
.sort { display: flex; align-items: center; gap: 13px; font-size: 12px; color: #74777c; font-weight: 500; }
.list-body { flex: 1; min-height: 0; display: flex; overflow: hidden; }
.cards { flex: 1; display: flex; flex-direction: column; gap: 10px; padding: 10px 1px 0 5px; }
.card { flex: none; height: 113px; display: flex; align-items: center; padding: 0 10px 0 33px; gap: 6px; border-radius: 5px; background: #fdfdfd; box-shadow: 0 2px 3px rgba(0,0,0,.16); }
.selected { background: #f0f1f2; }
.who { flex: 1; padding-bottom: 22px; display: flex; flex-direction: column; line-height: 18px; }
.who b { font-size: 14px; font-weight: 600; color: #0f1012; }
.who span { font-size: 12px; color: #6d7278; }
.who .call { display: flex; align-items: center; gap: 4px; font-style: italic; }
.tile { width: 11px; height: 11px; }
.when { display: flex; flex-direction: column; align-items: flex-end; padding-bottom: 20px; font-size: 10px; color: #6a6f74; }
.when em { background: #3f7dee; color: #fff; font-size: 12px; font-weight: 600; border-radius: 11px; width: 26px; height: 21px; line-height: 21px; text-align: center; margin-right: 4px; }
.list-scroll { width: 7px; height: 614px; margin-right: 1px; border-radius: 4px; background: #b4b4b4; }

.chat { flex: 1; min-width: 0; display: flex; flex-direction: column; position: relative; border-right: 2px solid #f4f4f5; }
.chat-head { flex: none; height: 76px; display: flex; align-items: center; padding: 0 28px 1px 30px; gap: 9px; border-bottom: 1px solid #ededee; position: relative; }
.chat-head h2 { flex: 1; font-size: 15px; font-weight: 600; color: #1e2126; padding: 0 0 2px 2px; }
.group { display: flex; border: 1px solid #dcdcde; border-radius: 6px; }
.group button { width: 42px; height: 36px; display: grid; place-items: center; color: #5f6478; }
.group button + button { border-left: 1px solid #dcdcde; }
.filter { width: 51px; height: 38px; border: 1px solid #6c7077; border-radius: 6px; color: #454b53; padding: 0 0 0 14px; }
.fold { position: absolute; right: -12px; top: 25px; width: 20px; height: 20px; border-radius: 50%; background: #626980; color: #fff; display: grid; place-items: center; z-index: 2; }
.messages { flex: 1; min-height: 0; display: flex; flex-direction: column; justify-content: flex-end; padding: 0 41px 62px 24px; }
.date { align-self: center; margin-left: 18px; padding: 0 12px; background: #f9fafb; border-radius: 5px; font-size: 11px; font-weight: 500; line-height: 27px; color: #5d6064; }
.msg-in { display: flex; margin-top: 22px; align-items: flex-start; }
.chat-mini { width: 12px; height: 12px; margin: 10px 0 0 -3px; z-index: 1; }
.cast { filter: drop-shadow(0 5px 6px rgba(0,0,0,.12)); }
.bubble-in { width: 525px; height: 106px; padding: 9px 24px 9px 23px; line-height: 22px; background: #e0eefb; color: #3b5bd6; border-radius: 3px; margin-left: -1px; clip-path: polygon(0 0, 100% 0, 100% 100%, 8px 100%, 8px 14px); }
.msg-out { display: flex; justify-content: flex-end; align-items: flex-start; margin-top: 50px; }
.bubble-out { width: 525px; height: 86px; padding: 9px 52px 11px 15px; line-height: 22px; color: #fff; background: #1c50d2; border-radius: 3px; clip-path: polygon(0 0, 100% 0, 515px 16px, 515px 100%, 0 100%); }
.sms { width: 9px; height: 9px; margin: 12px -3px 0 1px; z-index: 1; }
.ai-dot { width: 32px; height: 32px; border-radius: 50%; background: #f1f4f6; color: #7f9cf3; display: grid; place-items: center; margin-right: -18px; }
.reactions { align-self: flex-end; display: flex; gap: 9px; margin: 4px 31px 1px 0; }
.reactions button { width: 36px; height: 36px; border: 1px solid #dfe0e2; border-radius: 6px; display: grid; place-items: center; color: #17181a; background: #fefefe; }
.flip { transform: rotate(180deg); }
.sent { align-self: flex-start; margin-left: 437px; font-size: 12px; line-height: 18px; color: #a9abae; }

.composer { flex: none; border-top: 1px solid #d6d7da; padding-right: 8px; color: #6a7078; }
.row { display: flex; align-items: center; border-bottom: 1px solid #ededee; }
.actions { height: 55px; justify-content: flex-end; padding-right: 3px; }
.pill { height: 34px; border: 1px solid #e7e8e9; border-radius: 17px; display: flex; align-items: center; gap: 10px; padding: 0 16px; margin-right: 11px; white-space: nowrap; }
.internal { margin: 0 18px 4px 4px; }
.actions > svg { color: #33373d; }
.to { height: 45px; justify-content: flex-end; padding-right: 3px; }
.to-label { border-left: 1px solid #ededee; padding-left: 10px; line-height: 30px; }
.to select { width: 134px; height: 26px; padding-left: 8px; margin: 0 12px 0 7px; background: #f8fafb; border-radius: 5px; }
.write { position: relative; height: 132px; border-bottom: 1px solid #d9dadc; }
.write textarea { width: 100%; height: 130px; resize: none; display: block; }
.ai-pill { position: absolute; right: 12px; bottom: 8px; width: 43px; height: 29px; border: 1px solid #9a45d0; border-radius: 15px; background: #f3e8fc; color: #5a1ed0; padding: 4px 0 0 11px; }
.ai-pill i { position: absolute; right: -5px; bottom: -1px; width: 17px; height: 17px; border-radius: 50%; background: #12a150; }
.grip { position: absolute; right: 0; bottom: 6px; width: 9px; height: 9px; }
.toolbar { height: 40px; overflow: hidden; align-items: flex-start; padding-top: 11px; border: 0; }
.tools { flex: 1; display: flex; gap: 13px; padding: 10px 0 0 16px; align-items: center; color: #5f636d; }
.count { line-height: 38px; margin-right: 16px; }
.clear, .send, .later { height: 38px; font-weight: 500; }
.clear { width: 70px; border: 1px solid #d8dadd; border-radius: 6px; color: #343a44; margin-right: 8px; }
.send { width: 85px; background: #1a2233; color: #fff; border-radius: 6px 0 0 6px; border-right: 1px solid #0c1220; font-weight: 600; }
.later { width: 49px; background: #1a2233; color: #fff; border-radius: 0 6px 6px 0; display: grid; place-items: center; }

.popup { position: absolute; left: 2px; bottom: 32px; width: 310px; display: flex; background: #fdfdfd; box-shadow: 0 4px 14px rgba(0,0,0,.22); border-radius: 3px; padding-bottom: 2px; z-index: 3; }
.popup-main { flex: 1; padding-top: 12px; }
.popup-main button { display: flex; align-items: center; justify-content: space-between; width: 291px; height: 39px; padding: 0 10px 0 8px; text-align: left; color: #434a54; }
.popup-main .hover { background: #f1f2f3; border-radius: 4px; }
.popup-search { display: flex; align-items: center; gap: 6px; margin: 0 7px 12px 8px; width: 276px; height: 29px; border: 1px solid #e4e5e7; border-radius: 6px; padding: 0 10px; font-size: 13px; }
.popup-search input { width: 200px; }
.popup-search input::placeholder { color: #74797f; }
.bar { flex: none; display: flex; flex-direction: column; align-items: center; }
.bar .thumb { width: 10px; border-radius: 5px; background: #8a8a8a; }
.tri { width: 10px; height: 8px; fill: #8a8a8a; }
.popup-bar { width: 20px; padding: 5px 0 4px; }
.popup-bar .thumb { margin: auto 0 8px; height: 394px; }
.cursor { position: absolute; left: 190px; top: 322px; width: 20px; height: 24px; }

.details { flex: none; width: 506px; display: flex; overflow: hidden; }
.details-main { flex: 1; height: 892px; overflow: hidden; background: #f7f8f8; }
.profile { height: 140px; background: #fdfdfd; display: flex; flex-direction: column; align-items: center; padding-top: 11px; }
.profile-name { display: flex; align-items: center; gap: 13px; margin: 10px 8px 0 0; height: 22px; color: #33373d; }
.profile-name h2 { font-size: 15px; font-weight: 600; color: #1e2126; }
.profile-actions { display: flex; gap: 12px; margin-top: 17px; }
.profile-actions button { width: 33px; height: 32px; border: 1px solid #ececee; border-radius: 8px; display: grid; place-items: center; color: #5c6b6b; }
.panel { background: #fdfdfd; border: 1px solid #ececee; border-radius: 6px; margin: 0 1px 16px; box-shadow: 0 1px 5px rgba(0,0,0,.05); }
.panel-head { display: flex; align-items: center; width: 100%; height: 51px; padding: 0 19px 0 16px; justify-content: space-between; font-weight: 500; color: #3d424b; }
.field { padding: 0 17px 0 16px; color: #737880; }
.field-head { display: flex; align-items: center; gap: 8px; height: 20px; }
.field-head span { flex: 1; }
.ink { color: #25282c; }
.field svg:last-child { margin-right: 2px; }
.email, .tel, .owner { border-image: linear-gradient(90deg, transparent 20px, #ececee 20px, #ececee calc(100% - 25px), transparent calc(100% - 25px)) 1; border-bottom: 1px solid; }
.email { height: 37px; }
.tel { height: 97px; padding-top: 32px; }
.number { margin-top: 8px; padding-left: 15px; color: #5d646c; position: relative; }
.number::before { content: ""; position: absolute; left: 0; top: 6px; width: 8px; height: 8px; border-radius: 50%; background: #1c1e22; }
.owner { height: 105px; padding-top: 32px; }
.follow { height: 105px; padding-top: 31px; }
.pick { display: flex; align-items: center; margin-top: 9px; color: #a3a6ab; }
.pick select, .pick input { flex: 1; height: 20px; line-height: 20px; }
.pick input::placeholder { color: #a3a6ab; }
.details hr { margin: 0 0 14px; border: 0; border-top: 1px solid #ececee; }
.dnd { height: 160px; }
.off { margin-left: auto; margin-right: 41px; color: #5c6168; }
.dnd label { display: flex; align-items: center; gap: 8px; height: 41px; padding: 0 16px 5px 16px; font-size: 12px; font-weight: 500; color: #50565e; }
.dnd label span { flex: 1; }
.details-bar { width: 18px; height: 892px; padding: 5px 3px 4px 0; }
.details-bar .thumb { height: 655px; margin: 7px 0 auto; }

.rail { flex: none; width: 58px; height: 932px; background: #f6f7f7; padding: 12px 9px 0; display: flex; flex-direction: column; gap: 26px; color: #5d6a6a; }
.rail a { height: 42px; display: grid; place-items: center; border-radius: 4px; }
.rail .active { background: #edf3fd; color: #24282f; }
.rail a:last-child { height: 60px; padding-bottom: 18px; border-bottom: 1px solid #ebecec; border-radius: 0; }
```
